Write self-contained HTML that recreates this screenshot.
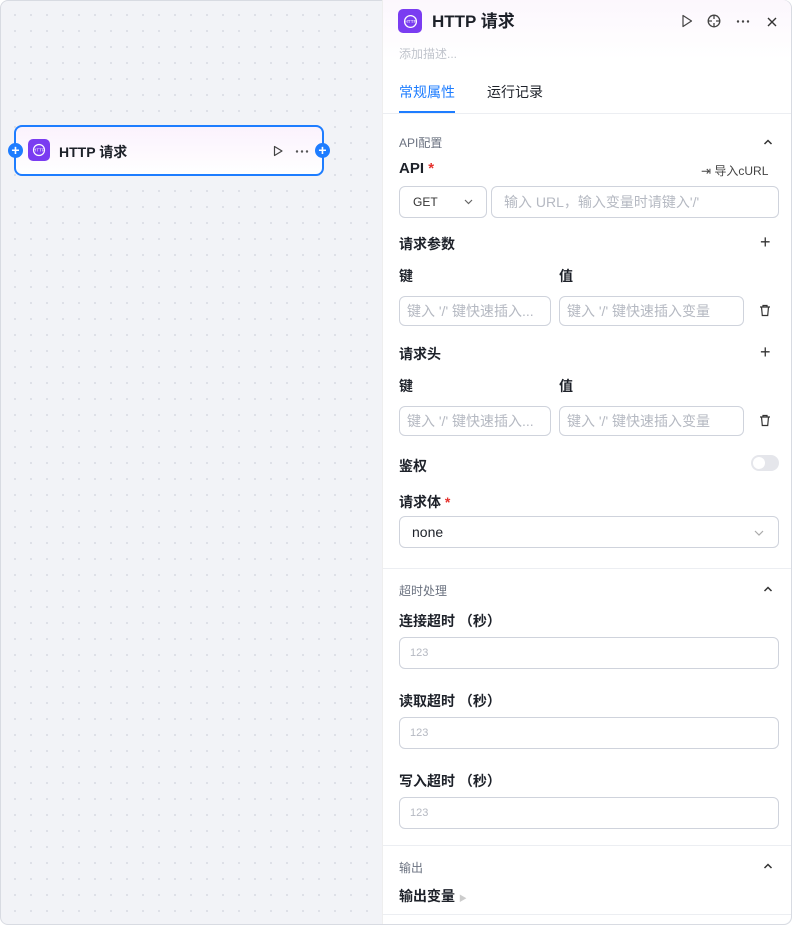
<!DOCTYPE html>
<html><head><meta charset="utf-8"><style>
*{box-sizing:border-box;margin:0;padding:0}
body{width:792px;height:925px;overflow:hidden;font-family:"Liberation Sans","Noto Sans CJK SC",sans-serif;color:#1d2129;position:relative;background:#fff}
.canvas{position:absolute;left:0;top:0;width:792px;height:925px;border:1px solid #d8dbe2;border-radius:8px;background-color:#f2f3f7;background-image:radial-gradient(circle,#dcdfe6 1px,transparent 1.2px);background-size:16px 16px;background-position:6px 6px;overflow:hidden}
.node{position:absolute;left:13px;top:124px;width:310px;height:51px;border:2px solid #1e7dff;border-radius:8px;background:linear-gradient(#fbf2fd,#fff)}
.ico{background:#7a3cf1;border-radius:5px;display:flex;align-items:center;justify-content:center}
.dot{position:absolute;width:15px;height:15px;border-radius:50%;background:#1e7dff;color:#fff;font-size:14px;line-height:14px;text-align:center;font-weight:bold}
.panel{position:absolute;left:383px;top:0px;width:408px;height:924px;background:#fff;box-shadow:-1px 0 0 #eee;border-radius:0 8px 8px 0;background-image:linear-gradient(#fcf7fd,#fff 60px)}
.a{position:absolute}
.lbl{position:absolute;left:16px;font-size:14px;font-weight:bold;color:#1d2129}
.sec{position:absolute;left:16px;font-size:12px;color:#6b7280}
.inp{position:absolute;border:1px solid #cfd3dc;border-radius:6px;font-size:14px;color:#b5b9c2;padding-left:7px;display:flex;align-items:center;white-space:nowrap;overflow:hidden}
.hr{position:absolute;left:0;width:408px;height:1px;background:#eceef2}
.car{position:absolute;left:380px;width:10px;height:10px}
</style></head><body>
<div class="canvas">
<div class="node">
 <div class="ico a" style="left:12px;top:12px;width:22px;height:22px"><svg width="14" height="14" viewBox="0 0 14 14"><circle cx="7" cy="7" r="5.5" fill="none" stroke="#fff" stroke-width="1.2"/><text x="7" y="8.6" font-size="4.5" fill="#fff" text-anchor="middle" font-family="Liberation Sans">HTTP</text></svg></div>
 <div class="a" style="left:43px;top:15px;font-size:14px;font-weight:bold">HTTP 请求</div>
 <svg class="a" style="left:256px;top:18px" width="12" height="12" viewBox="0 0 12 12"><path d="M2.5 1.5L10 6L2.5 10.5Z" fill="none" stroke="#444" stroke-width="1.2" stroke-linejoin="round"/></svg>
 <svg class="a" style="left:279px;top:23px" width="14" height="3" viewBox="0 0 14 3"><circle cx="2" cy="1.5" r="1.2" fill="#555"/><circle cx="7" cy="1.5" r="1.2" fill="#555"/><circle cx="12" cy="1.5" r="1.2" fill="#555"/></svg>
</div>
<div class="dot" style="left:7px;top:142px">+</div>
<div class="dot" style="left:314px;top:142px">+</div>
</div>
<div class="panel">
 <div class="ico a" style="left:15px;top:9px;width:24px;height:24px"><svg width="15" height="15" viewBox="0 0 14 14"><circle cx="7" cy="7" r="5.5" fill="none" stroke="#fff" stroke-width="1.2"/><text x="7" y="8.6" font-size="4.5" fill="#fff" text-anchor="middle" font-family="Liberation Sans">HTTP</text></svg></div>
 <div class="a" style="left:49px;top:11px;font-size:17px;font-weight:bold;line-height:22px">HTTP 请求</div>
 <svg class="a" style="left:298px;top:14px" width="12" height="14" viewBox="0 0 12 14"><path d="M2 1.5L10.5 7L2 12.5Z" fill="none" stroke="#444" stroke-width="1.2" stroke-linejoin="round"/></svg>
 <svg class="a" style="left:324px;top:14px" width="14" height="14" viewBox="0 0 14 14"><circle cx="7" cy="7" r="5.8" fill="none" stroke="#444" stroke-width="1.3"/><path d="M7 1v4M7 9v4M1 7h4M9 7h4" stroke="#444" stroke-width="1.3"/></svg>
 <svg class="a" style="left:353px;top:20px" width="14" height="3" viewBox="0 0 14 3"><circle cx="2" cy="1.5" r="1.2" fill="#444"/><circle cx="7" cy="1.5" r="1.2" fill="#444"/><circle cx="12" cy="1.5" r="1.2" fill="#444"/></svg>
 <svg class="a" style="left:384px;top:17px" width="10" height="10" viewBox="0 0 10 10"><path d="M1 1L9 9M9 1L1 9" stroke="#333" stroke-width="1.4"/></svg>
 <div class="a" style="left:16px;top:45px;font-size:12px;color:#c0c4cc">添加描述...</div>
 <div class="a" style="left:16px;top:82px;font-size:14px;color:#1e7dff">常规属性</div>
 <div class="a" style="left:16px;top:111px;width:56px;height:2px;background:#1e7dff"></div>
 <div class="a" style="left:104px;top:82px;font-size:14px;color:#1d2129">运行记录</div>
 <div class="hr" style="top:113px"></div>
 <div class="sec" style="top:134px">API配置</div>
 <svg class="car" style="top:137px" viewBox="0 0 10 10"><path d="M1.5 7L5 3.5L8.5 7" fill="none" stroke="#333" stroke-width="1.5"/></svg>
 <div class="lbl" style="top:160px;font-size:15px">API <span style="color:#e5322d">*</span></div>
 <div class="a" style="left:318px;top:162px;font-size:12px;color:#444">⇥ 导入cURL</div>
 <div class="inp" style="left:16px;top:186px;width:88px;height:32px;color:#333;font-size:12px;padding-left:13px">GET<svg style="position:absolute;left:64px;top:12px" width="9" height="6" viewBox="0 0 9 6"><path d="M1 1l3.5 3.5L8 1" fill="none" stroke="#666" stroke-width="1.2"/></svg></div>
 <div class="inp" style="left:108px;top:186px;width:288px;height:32px;padding-left:12px">输入 URL，输入变量时请键入'/'</div>
 <div class="lbl" style="top:234px">请求参数</div>
 <div class="a" style="left:377px;top:232px;font-size:18px;color:#333">+</div>
 <div class="lbl" style="top:266px">键</div><div class="lbl" style="left:176px;top:266px">值</div>
 <div class="inp" style="left:16px;top:296px;width:152px;height:30px">键入 '/' 键快速插入...</div>
 <div class="inp" style="left:176px;top:296px;width:185px;height:30px">键入 '/' 键快速插入变量</div>
 <svg class="a" style="left:376px;top:304px" width="12" height="13" viewBox="0 0 12 13"><path d="M1 3h10M4 3V1.5h4V3M2.5 3l.8 8.5h5.4L9.5 3" fill="none" stroke="#333" stroke-width="1.2"/></svg>
 <div class="lbl" style="top:344px">请求头</div>
 <div class="a" style="left:377px;top:342px;font-size:18px;color:#333">+</div>
 <div class="lbl" style="top:376px">键</div><div class="lbl" style="left:176px;top:376px">值</div>
 <div class="inp" style="left:16px;top:406px;width:152px;height:30px">键入 '/' 键快速插入...</div>
 <div class="inp" style="left:176px;top:406px;width:185px;height:30px">键入 '/' 键快速插入变量</div>
 <svg class="a" style="left:376px;top:414px" width="12" height="13" viewBox="0 0 12 13"><path d="M1 3h10M4 3V1.5h4V3M2.5 3l.8 8.5h5.4L9.5 3" fill="none" stroke="#333" stroke-width="1.2"/></svg>
 <div class="lbl" style="top:456px">鉴权</div>
 <div class="a" style="left:368px;top:455px;width:28px;height:16px;border-radius:8px;background:#e5e6eb"><div style="position:absolute;left:2px;top:2px;width:12px;height:12px;border-radius:50%;background:#fff"></div></div>
 <div class="lbl" style="top:492px">请求体 <span style="color:#e5322d">*</span></div>
 <div class="inp" style="left:16px;top:516px;width:380px;height:32px;color:#1d2129;font-size:14px;padding-left:12px">none<svg style="position:absolute;left:354px;top:13px" width="10" height="6" viewBox="0 0 10 6"><path d="M1 1l4 4L9 1" fill="none" stroke="#aaa" stroke-width="1.2"/></svg></div>
 <div class="hr" style="top:568px"></div>
 <div class="sec" style="top:582px">超时处理</div>
 <svg class="car" style="top:584px" viewBox="0 0 10 10"><path d="M1.5 7L5 3.5L8.5 7" fill="none" stroke="#333" stroke-width="1.5"/></svg>
 <div class="lbl" style="top:611px">连接超时 （秒）</div>
 <div class="inp" style="left:16px;top:637px;width:380px;height:32px;font-size:11px;padding-left:10px">123</div>
 <div class="lbl" style="top:691px">读取超时 （秒）</div>
 <div class="inp" style="left:16px;top:717px;width:380px;height:32px;font-size:11px;padding-left:10px">123</div>
 <div class="lbl" style="top:771px">写入超时 （秒）</div>
 <div class="inp" style="left:16px;top:797px;width:380px;height:32px;font-size:11px;padding-left:10px">123</div>
 <div class="hr" style="top:845px"></div>
 <div class="sec" style="top:859px">输出</div>
 <svg class="car" style="top:861px" viewBox="0 0 10 10"><path d="M1.5 7L5 3.5L8.5 7" fill="none" stroke="#333" stroke-width="1.5"/></svg>
 <div class="lbl" style="top:886px">输出变量 <span style="color:#ccc;font-size:8px">▶</span></div>
 <div class="hr" style="top:914px"></div>
</div>
</body></html>
